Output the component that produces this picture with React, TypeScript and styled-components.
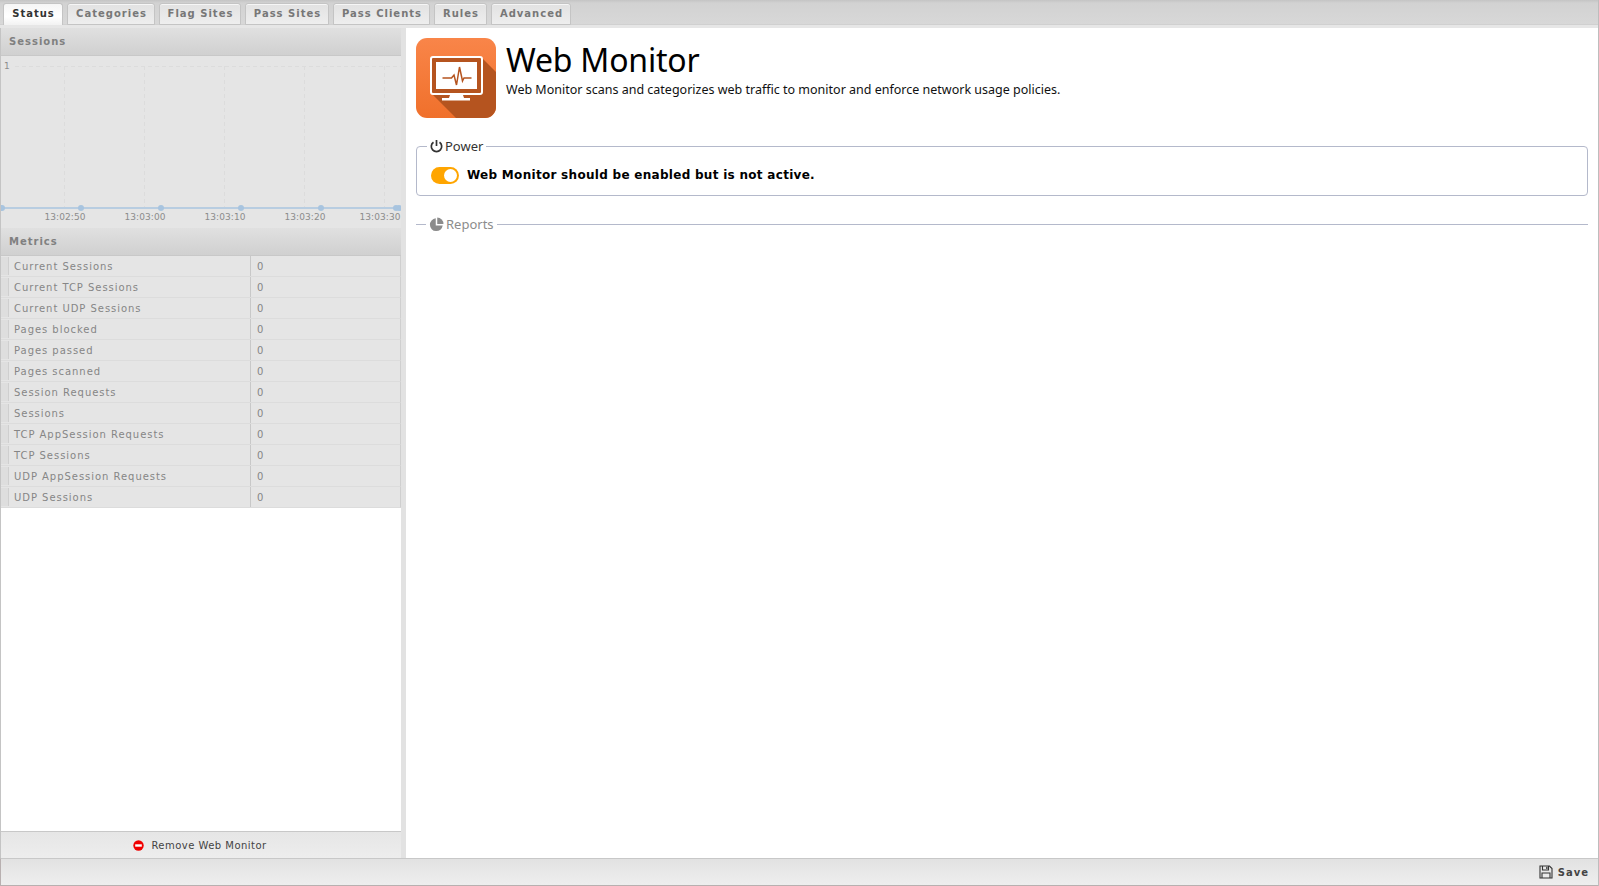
import React from "react";
import styled, { createGlobalStyle } from "styled-components";

const Global = createGlobalStyle`
  html, body { margin: 0; padding: 0; height: 100%; overflow: hidden; background: #fff; }
  * { box-sizing: border-box; }
`;

const Page = styled.div`
  width: 1599px;
  height: 886px;
  display: flex;
  flex-direction: column;
  font-family: "DejaVu Sans", sans-serif;
  border-right: 1px solid #bdbdbd;
`;

const TabBar = styled.div`
  height: 28px;
  flex: none;
  display: flex;
  gap: 4px;
  padding: 3px 0 0 3px;
  background: linear-gradient(#c4c4c4 0, #d2d2d2 3px, #d8d8d8 100%);
  border-bottom: 3px solid #e6e6e6;
  box-shadow: inset 0 -1px 0 #d0d0d0;
`;

const Tab = styled.div<{ $active?: boolean; $w: number }>`
  height: 22px;
  width: ${(p) => p.$w}px;
  flex: none;
  display: flex;
  align-items: center;
  justify-content: center;
  padding: 0 0 2px 1px;
  font-size: 10px;
  font-weight: 700;
  letter-spacing: 1px;
  color: ${(p) => (p.$active ? "#333" : "#777")};
  background: ${(p) => (p.$active ? "linear-gradient(#f6f6f6, #ffffff 60%, #f2f2f2)" : "linear-gradient(#e2e2e2, #eeeeee)")};
  border: 1px solid #c4c4c4;
  border-bottom: ${(p) => (p.$active ? "none" : "1px solid #c4c4c4")};
  border-radius: 3px 3px 0 0;
  box-shadow: inset 0 1px 0 #f6f6f6;
`;

const Body = styled.div`
  flex: 1;
  min-height: 0;
  display: flex;
`;

const Left = styled.div`
  width: 401px;
  flex: none;
  display: flex;
  flex-direction: column;
  background: #fff;
  border-left: 1px solid #c4c4c4;
`;

const Gutter = styled.div`
  width: 5px;
  flex: none;
  background: #e2e2e2;
`;

const PanelHeader = styled.div`
  height: 28px;
  flex: none;
  display: flex;
  align-items: center;
  padding-left: 8px;
  font-size: 10px;
  font-weight: 700;
  letter-spacing: 1px;
  color: #808080;
  background: linear-gradient(#e0e0e0, #d0d0d0);
  border-bottom: 1px solid #c8c8c8;
`;

const ChartBox = styled.div`
  height: 172px;
  flex: none;
  background: #e5e5e5;
  svg { display: block; }
`;

const Table = styled.div`
  display: flex;
  flex-direction: column;
`;

const Row = styled.div`
  height: 21px;
  flex: none;
  display: grid;
  grid-template-columns: 250px 1fr;
  background: #e5e5e5;
  border-bottom: 1px solid #dcdcdc;
  border-right: 1px solid #cfcfcf;
  font-size: 10px;
  letter-spacing: 0.96px;
  color: #868686;
`;

const NameCell = styled.div`
  display: flex;
  align-items: center;
  gap: 5px;
  border-right: 1px solid #c8c8c8;
`;

const Handle = styled.span`
  width: 8px;
  height: 18px;
  background: #dedede;
  border-right: 1px solid #cfcfcf;
`;

const ValueCell = styled.div`
  display: flex;
  align-items: center;
  padding-left: 6px;
`;

const Spacer = styled.div`
  flex: 1;
  background: #fff;
`;

const RemoveBar = styled.div`
  height: 27px;
  flex: none;
  display: flex;
  align-items: center;
  justify-content: center;
  gap: 7px;
  padding-right: 2px;
  background: linear-gradient(#e6e6e6, #ededed);
  border-top: 1px solid #c8c8c8;
  font-size: 10px;
  letter-spacing: 0.47px;
  color: #444;
`;

const Right = styled.div`
  flex: 1;
  min-width: 0;
  background: #fff;
  padding: 10px 10px 0 10px;
`;

const Hero = styled.div`
  display: flex;
  gap: 10px;
  height: 80px;
`;

const HeroText = styled.div`
  display: flex;
  flex-direction: column;
  font-family: "Noto Sans", sans-serif;
  color: #000;
`;

const Title = styled.h1`
  margin: 0;
  font-size: 32px;
  font-weight: 400;
  line-height: 43px;
  letter-spacing: -0.2px;
`;

const Desc = styled.p`
  margin: 0;
  font-size: 12.5px;
  line-height: 18px;
  color: #111;
`;

const Field = styled.fieldset<{ $collapsed?: boolean }>`
  margin: 19px 0 0;
  padding: 0;
  height: ${(p) => (p.$collapsed ? "10px" : "59px")};
  border: 1px solid #b4b9cb;
  border-width: ${(p) => (p.$collapsed ? "1px 0 0" : "1px")};
  border-radius: ${(p) => (p.$collapsed ? "0" : "4px")};
  min-width: 0;
`;

const Legend = styled.legend<{ $muted?: boolean }>`
  margin-left: 10px;
  padding: 0 3px;
  display: flex;
  align-items: center;
  gap: 2px;
  font-family: "Noto Sans", sans-serif;
  font-size: 13px;
  line-height: 18px;
  color: ${(p) => (p.$muted ? "#8c8c8c" : "#333")};
`;

const PowerRow = styled.div`
  display: flex;
  align-items: center;
  gap: 8px;
  padding: 10px 14px 0;
  font-size: 12px;
  font-weight: 700;
  letter-spacing: 0.29px;
  color: #000;
`;

const Toggle = styled.span`
  position: relative;
  display: block;
  width: 28px;
  height: 17px;
  margin-top: 2px;
  border-radius: 9px;
  background: #ffa500;
  &::after {
    content: "";
    position: absolute;
    right: 2px;
    top: 2px;
    width: 13px;
    height: 13px;
    border-radius: 50%;
    background: #fff;
  }
`;

const Footer = styled.div`
  height: 28px;
  flex: none;
  display: flex;
  align-items: center;
  justify-content: flex-end;
  gap: 5px;
  padding-right: 9px;
  background: linear-gradient(#e2e2e2, #eeeeee);
  border-top: 1px solid #c8c8c8;
  border-left: 1px solid #b8b0b0;
  border-bottom: 1px solid #b8b0b0;
  font-size: 10px;
  font-weight: 700;
  letter-spacing: 1px;
  color: #444;
`;

const tabs: [string, number][] = [
  ["Status", 60], ["Categories", 88], ["Flag Sites", 82], ["Pass Sites", 84],
  ["Pass Clients", 97], ["Rules", 53], ["Advanced", 80],
];

const metrics = [
  "Current Sessions", "Current TCP Sessions", "Current UDP Sessions", "Pages blocked",
  "Pages passed", "Pages scanned", "Session Requests", "Sessions",
  "TCP AppSession Requests", "TCP Sessions", "UDP AppSession Requests", "UDP Sessions",
];

const Chart = () => (
  <svg width="400" height="172" viewBox="0 0 400 172">
    <g stroke="#dcdcdc" strokeDasharray="4 3" fill="none">
      <path d="M14 10.5H400" />
      {[63, 143, 223, 303, 383].map((x) => (
        <path key={x} d={`M${x}.5 10V151`} />
      ))}
    </g>
    <text x="3" y="13" fontSize="9" fill="#8c8c8c" fontFamily="DejaVu Sans">1</text>
    <path d="M0 152H398" stroke="#a8c4df" strokeWidth="1.500" />
    <g fill="#a8c4df">
      {[1, 80, 160, 240, 320, 395, 398].map((x) => (
        <circle key={x} cx={x} cy="152" r="3" />
      ))}
    </g>
    <g fontSize="9" fill="#8c8c8c" fontFamily="DejaVu Sans" textAnchor="middle" letterSpacing="0.1">
      {[["13:02:50", 64], ["13:03:00", 144], ["13:03:10", 224], ["13:03:20", 304], ["13:03:30", 379]].map(([t, x]) => (
        <text key={t as string} x={x as number} y="164">{t}</text>
      ))}
    </g>
  </svg>
);

const AppIcon = () => (
  <svg width="80" height="80" viewBox="0 0 80 80">
    <defs>
      <linearGradient id="og" x1="0" y1="0" x2="0" y2="1">
        <stop offset="0" stopColor="#f98549" />
        <stop offset="1" stopColor="#f0702b" />
      </linearGradient>
      <clipPath id="rr"><rect width="80" height="80" rx="11" /></clipPath>
    </defs>
    <g clipPath="url(#rr)">
      <rect width="80" height="80" fill="url(#og)" />
      <path d="M64 18 L80 34 V80 H40 L14 54 Z" fill="#b5541f" />
    </g>
    <rect x="15" y="19" width="51" height="37" rx="2" fill="#b5541f" stroke="#fff" strokeWidth="2" />
    <rect x="20" y="24" width="41" height="27" fill="#fff" />
    <path d="M26.500 40h9l2.500-3 2.500 10 3-18 3 14 1.500-3h7.500" fill="none" stroke="#b5541f" strokeWidth="1.500" />
    <path d="M34 57h13l1 3H33Z" fill="#fff" />
    <rect x="26" y="60" width="28" height="2.500" fill="#fff" />
  </svg>
);

const PowerIcon = () => (
  <svg width="13" height="14" viewBox="0 0 13 14" fill="none" stroke="#333" strokeWidth="1.700">
    <path d="M3.500 3.200A5.200 5.200 0 1 0 9.500 3.200" />
    <path d="M6.500 1V7" />
  </svg>
);

const PieIcon = () => (
  <svg width="15" height="15" viewBox="0 0 14 14" fill="#8c8c8c">
    <path d="M6.300 1.200A6 6 0 1 0 12.800 8H6.300Z" />
    <path d="M7.700 0.500A6 6 0 0 1 13.500 6.600H7.700Z" />
  </svg>
);

const RemoveIcon = () => (
  <svg width="11" height="11" viewBox="0 0 11 11">
    <circle cx="5.500" cy="5.500" r="5.200" fill="#f00000" />
    <rect x="2.200" y="4.300" width="6.600" height="2.400" fill="#fff" />
  </svg>
);

const SaveIcon = () => (
  <svg width="14" height="14" viewBox="0 0 14 14" fill="none" stroke="#333" strokeWidth="1.100">
    <path d="M1 1H10.500L13 3.500V13H1Z" />
    <path d="M3.500 1V5H9.500V1" />
    <path d="M3 13V8H11V13" />
    <rect x="7.200" y="1.800" width="1.300" height="2.200" fill="#333" stroke="none" />
  </svg>
);

export default function App() {
  return (
    <Page>
      <Global />
      <TabBar>
        {tabs.map(([t, w], i) => (
          <Tab key={t} $w={w} $active={i === 0}>{t}</Tab>
        ))}
      </TabBar>
      <Body>
        <Left>
          <PanelHeader>Sessions</PanelHeader>
          <ChartBox><Chart /></ChartBox>
          <PanelHeader>Metrics</PanelHeader>
          <Table>
            {metrics.map((m) => (
              <Row key={m}>
                <NameCell><Handle />{m}</NameCell>
                <ValueCell>0</ValueCell>
              </Row>
            ))}
          </Table>
          <Spacer />
          <RemoveBar><RemoveIcon />Remove Web Monitor</RemoveBar>
        </Left>
        <Gutter />
        <Right>
          <Hero>
            <AppIcon />
            <HeroText>
              <Title>Web Monitor</Title>
              <Desc>Web Monitor scans and categorizes web traffic to monitor and enforce network usage policies.</Desc>
            </HeroText>
          </Hero>
          <Field>
            <Legend><PowerIcon />Power</Legend>
            <PowerRow><Toggle />Web Monitor should be enabled but is not active.</PowerRow>
          </Field>
          <Field $collapsed>
            <Legend $muted><PieIcon />Reports</Legend>
          </Field>
        </Right>
      </Body>
      <Footer><SaveIcon />Save</Footer>
    </Page>
  );
}
